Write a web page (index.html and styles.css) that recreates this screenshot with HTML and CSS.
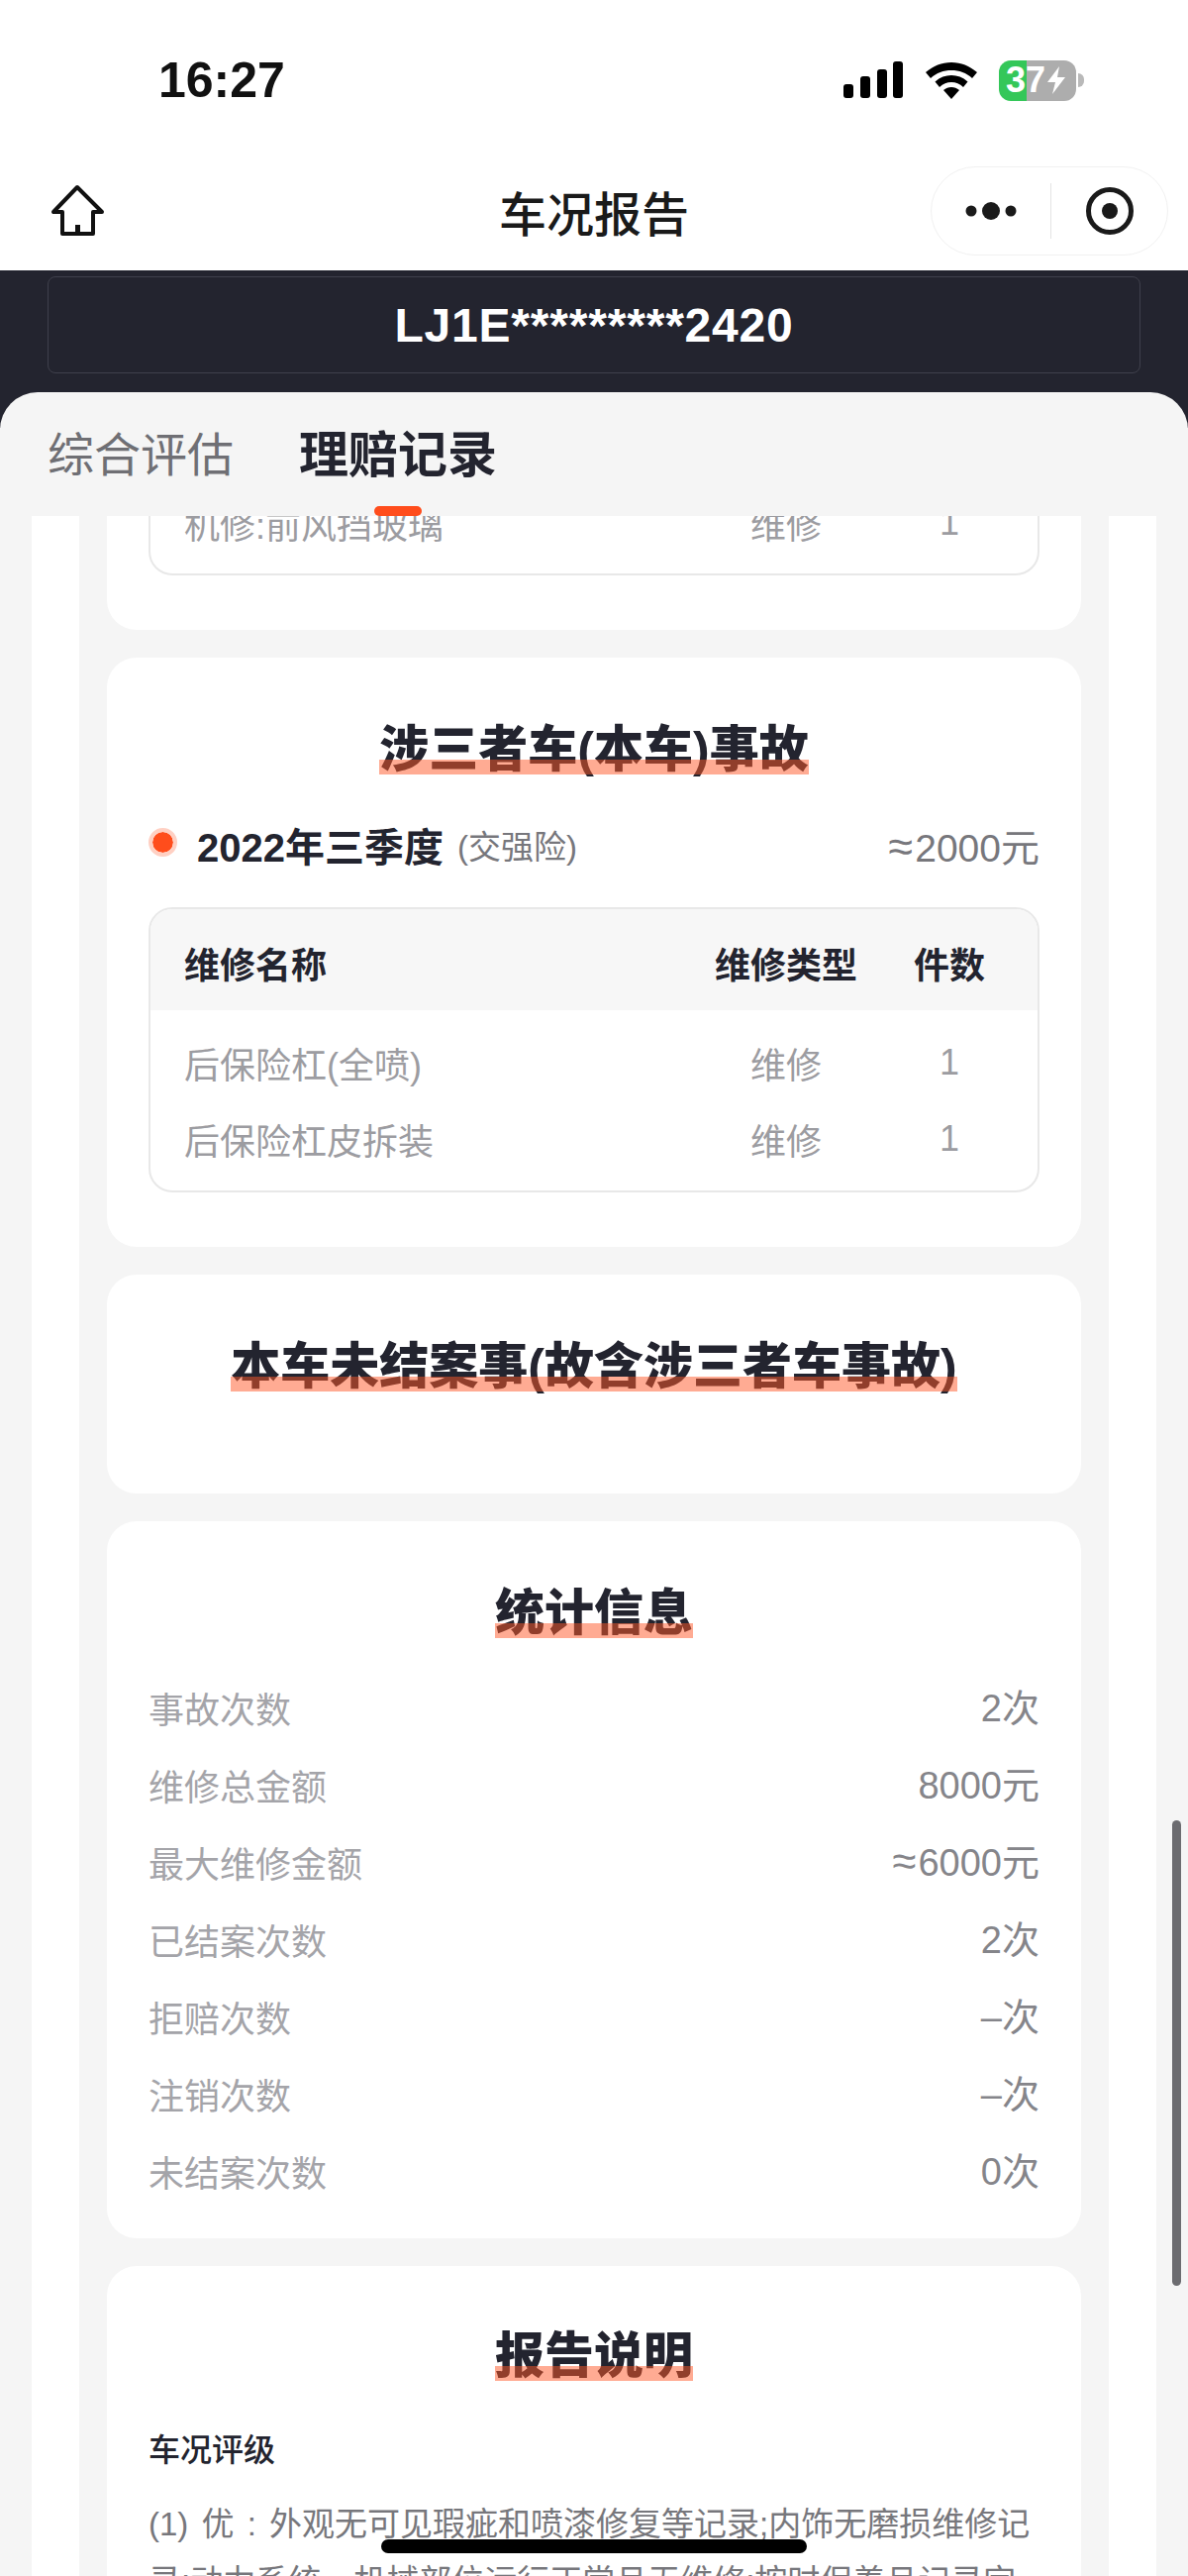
FILE: index.html
```html
<!DOCTYPE html>
<html>
<head>
    <title>车况报告</title>
    <link rel="stylesheet" href="styles.css">
</head>
<body>
    <div class="phone">
        <div class="status-bar">
            <span class="time">16:27</span>
            <div class="status-icons">
                <svg class="signal" width="62" height="40" viewBox="0 0 62 40">
                    <rect x="1" y="24" width="10" height="14" rx="3"/>
                    <rect x="18" y="16" width="10" height="22" rx="3"/>
                    <rect x="35" y="9" width="10" height="29" rx="3"/>
                    <rect x="51" y="1" width="10" height="37" rx="3"/>
                </svg>
                <svg class="wifi" width="54" height="40" viewBox="0 0 54 40">
                    <path d="M27 2C17 2 9 5.5 1 12L6 18C12 12.5 19 10 27 10C35 10 42 12.5 48 18L53 12C45 5.5 37 2 27 2Z"/>
                    <path d="M27 15C21 15 15.5 17 10.5 21.5L15 27C18.5 23.5 22.5 22 27 22C31.5 22 35.5 23.5 39 27L43.5 21.5C38.5 17 33 15 27 15Z"/>
                    <path d="M27 27C24 27 21.5 28 19 30L27 39L35 30C32.5 28 30 27 27 27Z"/>
                </svg>
                <div class="battery">
                    <div class="battery-body">
                        <span class="battery-num">37</span>
                        <svg class="bolt" width="20" height="30" viewBox="0 0 20 30"><path d="M13 1L1 17H9L6 29L19 12H11Z"/></svg>
                    </div>
                    <span class="battery-cap"></span>
                </div>
            </div>
        </div>

        <div class="nav-bar">
            <svg class="home-icon" width="56" height="54" viewBox="0 0 56 54">
                <path d="M28 3L4 28H13V50H44V28H53Z"/>
                <path class="home-door" d="M28.5 50V41"/>
            </svg>
            <span class="nav-title">车况报告</span>
            <div class="capsule">
                <svg class="capsule-more" width="60" height="20" viewBox="0 0 60 20">
                    <circle cx="10" cy="10" r="5.5"/>
                    <circle cx="30" cy="10" r="9"/>
                    <circle cx="50" cy="10" r="5.5"/>
                </svg>
                <span class="capsule-line"></span>
                <svg class="capsule-close" width="50" height="50" viewBox="0 0 50 50">
                    <circle class="ring" cx="25" cy="25" r="21.5"/>
                    <circle cx="25" cy="25" r="8"/>
                </svg>
            </div>
        </div>

        <div class="vin-area">
            <div class="vin-box">LJ1E*********2420</div>
        </div>

        <div class="tabs">
            <span class="tab">综合评估</span>
            <span class="tab tab-active">理赔记录</span>
        </div>

        <div class="scroll-area">
            <div class="frame">
                <div class="column">
                    <!-- Scrolled past the top, only the last row shows -->
                    <div class="card card-cut">
                        <div class="repair-table table-cut">
                            <div class="repair-row">
                                <span>机修:前风挡玻璃</span>
                                <span class="col-center">维修</span>
                                <span class="col-center">1</span>
                            </div>
                        </div>
                    </div>

                    <div class="card card-accident">
                        <h2 class="card-title"><span>涉三者车(本车)事故</span></h2>
                        <div class="claim-head">
                            <span class="dot"></span>
                            <span class="claim-date">2022年三季度</span>
                            <span class="claim-type">(交强险)</span>
                            <span class="claim-amount"><span class="approx">≈</span>2000元</span>
                        </div>
                        <div class="repair-table">
                            <div class="repair-row repair-head">
                                <span>维修名称</span>
                                <span class="col-center">维修类型</span>
                                <span class="col-center">件数</span>
                            </div>
                            <div class="repair-body">
                                <div class="repair-row">
                                    <span>后保险杠(全喷)</span>
                                    <span class="col-center">维修</span>
                                    <span class="col-center">1</span>
                                </div>
                                <div class="repair-row">
                                    <span>后保险杠皮拆装</span>
                                    <span class="col-center">维修</span>
                                    <span class="col-center">1</span>
                                </div>
                            </div>
                        </div>
                    </div>

                    <div class="card card-open">
                        <h2 class="card-title"><span>本车未结案事(故含涉三者车事故)</span></h2>
                    </div>

                    <div class="card card-stats">
                        <h2 class="card-title"><span>统计信息</span></h2>
                        <div class="stats">
                            <div class="stat-row"><span>事故次数</span><span class="stat-value">2次</span></div>
                            <div class="stat-row"><span>维修总金额</span><span class="stat-value">8000元</span></div>
                            <div class="stat-row"><span>最大维修金额</span><span class="stat-value"><span class="approx">≈</span>6000元</span></div>
                            <div class="stat-row"><span>已结案次数</span><span class="stat-value">2次</span></div>
                            <div class="stat-row"><span>拒赔次数</span><span class="stat-value">–次</span></div>
                            <div class="stat-row"><span>注销次数</span><span class="stat-value">–次</span></div>
                            <div class="stat-row"><span>未结案次数</span><span class="stat-value">0次</span></div>
                        </div>
                    </div>

                    <div class="card card-notes">
                        <h2 class="card-title"><span>报告说明</span></h2>
                        <h3 class="notes-title">车况评级</h3>
                        <p class="notes-text">(1) 优 : 外观无可见瑕疵和喷漆修复等记录;内饰无磨损维修记录;动力系统、机械部位运行正常且无维修;按时保养且记录完整</p>
                    </div>
                </div>
            </div>
        </div>

        <div class="scrollbar"></div>
        <div class="home-bar"></div>
    </div>
</body>
</html>
```

FILE: styles.css
```css
* {
    box-sizing: border-box;
}

body {
    margin: 0;
    font-family: "Liberation Sans", "Noto Sans CJK SC", sans-serif;
    background-color: #f5f5f5;
}

.phone {
    position: relative;
    display: flex;
    flex-direction: column;
    height: 2601px;
    overflow: hidden;
}

/* Status bar */
.status-bar {
    display: flex;
    justify-content: space-between;
    align-items: center;
    height: 162px;
    padding: 0 105px 0 160px;
    background-color: #fff;
}

.time {
    font-size: 50px;
    font-weight: 700;
    color: #111;
}

.status-icons {
    display: flex;
    align-items: center;
    gap: 21px;
}

.battery {
    display: flex;
    align-items: center;
    gap: 2px;
}

.battery-body {
    display: flex;
    align-items: center;
    width: 78px;
    height: 41px;
    padding-left: 7px;
    border-radius: 12px;
    background: linear-gradient(to right, #34c759 36%, #adadad 36%);
}

.battery-num {
    font-size: 36px;
    font-weight: 700;
    color: #fff;
}

.bolt {
    fill: #fff;
    margin-left: 1px;
}

.battery-cap {
    width: 6px;
    height: 14px;
    border-radius: 0 6px 6px 0;
    background-color: #b9b9b9;
}

/* Nav bar */
.nav-bar {
    position: relative;
    display: flex;
    justify-content: space-between;
    align-items: center;
    height: 111px;
    padding: 0 20px 10px 50px;
    background-color: #fff;
}

.home-icon {
    fill: none;
    stroke: #111;
    stroke-width: 4;
    stroke-linejoin: round;
}

.home-door {
    stroke-width: 5;
}

.nav-title {
    position: absolute;
    left: 0;
    right: 0;
    text-align: center;
    font-size: 48px;
    font-weight: 500;
    color: #1a1a1a;
}

.capsule {
    display: flex;
    align-items: center;
    width: 240px;
    height: 90px;
    border: 1px solid #f1f1f1;
    border-radius: 45px;
    background-color: #fff;
    padding-left: 30px;
}

.capsule-more, .capsule-close {
    fill: #1a1a1a;
}

.capsule-line {
    width: 1px;
    height: 56px;
    margin: 0 34px 0 30px;
    background-color: #e4e4e4;
}

.capsule-close .ring {
    fill: none;
    stroke: #1a1a1a;
    stroke-width: 5;
}

/* VIN */
.vin-area {
    height: 159px;
    padding: 6px 48px 0;
    margin-bottom: -36px;
    background-color: #23242f;
}

.vin-box {
    display: flex;
    justify-content: center;
    align-items: center;
    height: 98px;
    border: 1px solid #3f404c;
    border-radius: 8px;
    font-size: 48px;
    font-weight: 700;
    letter-spacing: 0.8px;
    color: #fff;
}

/* Tabs */
.tabs {
    position: relative;
    display: flex;
    align-items: center;
    gap: 66px;
    height: 125px;
    padding: 2px 48px 0;
    border-radius: 38px 38px 0 0;
    background-color: #f5f5f5;
    z-index: 1;
}

.tab {
    font-size: 47px;
    line-height: 70px;
    color: #6f6f74;
}

.tab-active {
    position: relative;
    font-size: 50px;
    font-weight: 700;
    color: #23242f;
}

.tab-active::after {
    content: "";
    position: absolute;
    left: 50%;
    bottom: -26px;
    width: 48px;
    height: 10px;
    margin-left: -24px;
    border-radius: 5px;
    background-color: #ff4d1c;
}

/* Scrolling content */
.scroll-area {
    flex: 1;
    min-height: 0;
    overflow: hidden;
    padding: 0 32px;
}

.frame {
    padding: 0 48px;
    background-color: #fff;
}

.column {
    display: flow-root;
    padding: 0 28px 40px;
    background-color: #f5f5f5;
}

.card {
    padding: 0 42px;
    margin-bottom: 28px;
    border-radius: 30px;
    background-color: #fff;
}

.card-cut {
    height: 115px;
    border-radius: 0 0 30px 30px;
}

.card-title {
    margin: 0;
    text-align: center;
    font-size: 50px;
    font-weight: 900;
    line-height: 70px;
    color: #23242f;
}

.card-title span {
    position: relative;
}

/* Sits over the text, the letters show through it */
.card-title span::after {
    content: "";
    position: absolute;
    left: 0;
    right: 0;
    top: 38px;
    height: 15px;
    background-color: rgba(255, 88, 40, 0.5);
}

/* Repair table */
.repair-table {
    height: 288px;
    border: 2px solid #e8e8e8;
    border-radius: 24px;
    overflow: hidden;
}

.table-cut {
    display: flow-root;
    height: 60px;
    border-top: 0;
    border-radius: 0 0 24px 24px;
}

.table-cut .repair-row {
    margin-top: -32px;
}

.repair-row {
    display: grid;
    grid-template-columns: 1fr 144px 72px;
    column-gap: 57px;
    align-items: center;
    height: 77px;
    padding: 0 53px 0 34px;
    font-size: 36px;
    color: #9c9ca1;
}

.col-center {
    text-align: center;
}

.repair-head {
    height: 102px;
    padding-top: 6px;
    font-weight: 700;
    color: #23242f;
    background-color: #f7f7f7;
}

.repair-body {
    padding-top: 14px;
}

/* Accident card */
.card-accident {
    height: 595px;
    padding-top: 58px;
}

.claim-head {
    display: flex;
    align-items: center;
    margin-top: 31px;
    height: 60px;
    margin-bottom: 33px;
}

.dot {
    width: 29px;
    height: 29px;
    margin: 0 20px 6px 0;
    border: 4px solid #ffd0c3;
    border-radius: 50%;
    background-color: #ff4d1c;
    background-clip: padding-box;
}

.claim-date {
    font-size: 40px;
    font-weight: 700;
    color: #23242f;
}

.claim-type {
    margin-left: 14px;
    font-size: 33px;
    color: #77777c;
}

.claim-amount {
    margin-left: auto;
    font-size: 39px;
    color: #77777c;
}

.approx {
    margin-right: 2px;
    font-size: 1.15em;
}

/* Open case card */
.card-open {
    height: 221px;
    padding-top: 58px;
}

/* Stats card */
.card-stats {
    height: 724px;
    padding-top: 58px;
}

.stats {
    margin-top: 21px;
}

.stat-row {
    display: flex;
    justify-content: space-between;
    align-items: center;
    height: 78px;
    font-size: 36px;
    color: #a4a4a9;
}

.stat-value {
    margin-bottom: 5px;
    font-size: 38px;
    color: #85858a;
}

/* Notes card */
.card-notes {
    height: 400px;
    padding-top: 56px;
}

.notes-title {
    margin: 36px 0 0;
    font-size: 32px;
    font-weight: 500;
    line-height: 48px;
    color: #23242f;
}

.notes-text {
    margin: 22px 0 0;
    font-size: 33px;
    line-height: 58px;
    word-spacing: 4px;
    color: #77777c;
}

/* Overlays */
.scrollbar {
    position: absolute;
    left: 1184px;
    top: 1838px;
    width: 9px;
    height: 470px;
    border-radius: 5px;
    background-color: #6c6c70;
}

.home-bar {
    position: absolute;
    left: 385px;
    top: 2564px;
    width: 430px;
    height: 14px;
    border-radius: 7px;
    background-color: #000;
}
```
